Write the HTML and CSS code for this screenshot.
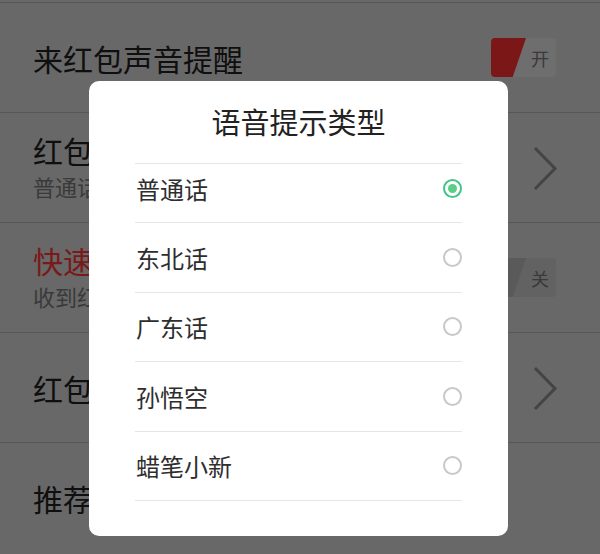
FILE: index.html
```html
<!DOCTYPE html>
<html lang="zh-CN">
<head>
<meta charset="utf-8">
<link rel="stylesheet" href="styles.css">
</head>
<body>
<div class="settings">
  <div class="row">
    <div class="texts"><div class="title">来红包声音提醒</div></div>
    <div class="toggle on"><span class="knob"></span><span class="lbl">开</span></div>
  </div>
  <div class="row two">
    <div class="texts"><div class="title">红包提示音类型</div><div class="sub">普通话</div></div>
    <svg class="chev" width="26" height="45" viewBox="0 0 26 45"><polyline points="3,2 23,22.5 3,43" fill="none" stroke="#7c7c7c" stroke-width="3"/></svg>
  </div>
  <div class="row two">
    <div class="texts"><div class="title red">快速抢红包模式</div><div class="sub">收到红包后自动打开</div></div>
    <div class="toggle off"><span class="knob"></span><span class="lbl">关</span></div>
  </div>
  <div class="row">
    <div class="texts"><div class="title">红包记录</div></div>
    <svg class="chev" width="26" height="45" viewBox="0 0 26 45"><polyline points="3,2 23,22.5 3,43" fill="none" stroke="#7c7c7c" stroke-width="3"/></svg>
  </div>
  <div class="row">
    <div class="texts"><div class="title">推荐给好友</div></div>
  </div>
</div>
<div class="mask"></div>
<div class="dialog">
  <div class="dlg-title">语音提示类型</div>
  <ul class="opts">
    <li class="opt first"><span>普通话</span><span class="radio checked"></span></li>
    <li class="opt"><span>东北话</span><span class="radio"></span></li>
    <li class="opt"><span>广东话</span><span class="radio"></span></li>
    <li class="opt"><span>孙悟空</span><span class="radio"></span></li>
    <li class="opt"><span>蜡笔小新</span><span class="radio"></span></li>
  </ul>
</div>
</body>
</html>
```
FILE: styles.css
```css
* { box-sizing: border-box; }
html, body { margin: 0; padding: 0; }
body {
  width: 600px;
  height: 554px;
  overflow: hidden;
  background: #bdbdbd;
  font-family: "Noto Sans CJK SC", "Noto Sans", sans-serif;
  position: relative;
}
.settings { padding-top: 2px; }
.row {
  height: 110px;
  border-top: 1px solid #9e9e9e;
  display: flex;
  align-items: center;
  justify-content: space-between;
  padding: 0 43px 0 33px;
}
.texts { display: flex; flex-direction: column; }
.title { font-size: 30px; line-height: 36px; color: #1c1c1c; }
.title.red { color: #dc3030; }
.sub { font-size: 22px; line-height: 26px; color: #6a6a6a; margin-top: 5px; }
.row.two .texts { margin-top: -4px; }
.chev { display: block; margin-right: -1px; margin-top: 2px; }
.toggle {
  width: 65px;
  height: 39px;
  border-radius: 4px;
  position: relative;
  overflow: hidden;
  display: flex;
  justify-content: flex-end;
  align-items: center;
  margin-right: 1px;
}
.toggle.on { background: #c8c8c8; }
.toggle.off { background: #b2b2b2; }
.toggle .knob {
  position: absolute;
  left: 0;
  top: 0;
  height: 100%;
}
.toggle.on .knob {
  width: 35px;
  background: #e02a2a;
  clip-path: polygon(0 0, 100% 0, 62% 100%, 0 100%);
}
.toggle.off .knob {
  width: 35px;
  background: #a4a4a4;
  clip-path: polygon(0 0, 100% 0, 62% 100%, 0 100%);
}
.toggle .lbl {
  width: 32px;
  text-align: center;
  font-size: 18px;
  color: #6a6a6a;
  position: relative;
}
.mask {
  position: absolute;
  inset: 0;
  background: rgba(0, 0, 0, 0.45);
}
.dialog {
  position: absolute;
  left: 89px;
  top: 81px;
  width: 419px;
  height: 455px;
  background: #fff;
  border-radius: 10px;
  padding: 0 46px;
}
.dlg-title {
  height: 83px;
  border-bottom: 1px solid #e6e6e6;
  display: flex;
  align-items: center;
  justify-content: center;
  font-size: 29px;
  color: #222;
  padding-bottom: 2px;
}
.opts { list-style: none; margin: 0; padding: 0; }
.opt {
  height: 69.5px;
  border-bottom: 1px solid #e6e6e6;
  display: flex;
  align-items: center;
  justify-content: space-between;
  font-size: 24px;
  color: #2e2e2e;
  padding-left: 1px;
}
.opt.first { height: 59px; padding-bottom: 9px; }
.radio {
  width: 19px;
  height: 19px;
  border-radius: 50%;
  border: 2px solid #c8c8c8;
  margin-right: 0;
  position: relative;
}
.radio.checked { border-color: #40c489; }
.radio.checked::after {
  content: "";
  position: absolute;
  left: 50%;
  top: 50%;
  width: 9px;
  height: 9px;
  margin: -4.5px 0 0 -4.5px;
  border-radius: 50%;
  background: #5ccd86;
}
```
